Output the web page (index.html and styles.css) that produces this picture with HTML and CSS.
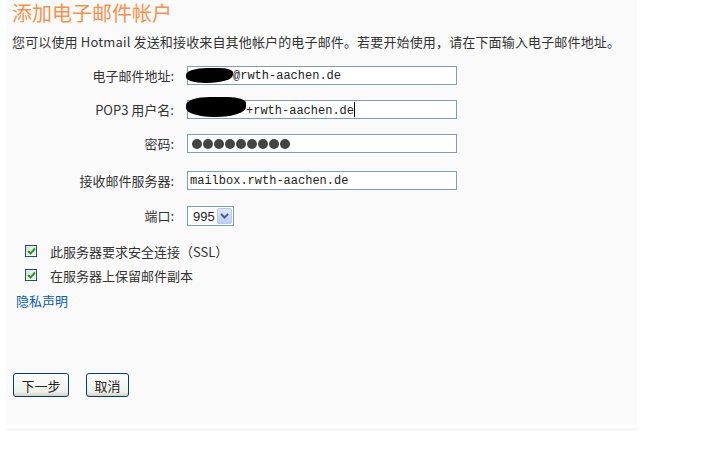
FILE: index.html
```html
<!DOCTYPE html>
<html lang="zh-CN">
<head>
    <meta charset="UTF-8">
    <title>添加电子邮件帐户</title>
    <link rel="stylesheet" href="styles.css">
</head>
<body>
    <div class="panel">
        <h2 class="title">添加电子邮件帐户</h2>
        <p class="intro">您可以使用 Hotmail 发送和接收来自其他帐户的电子邮件。若要开始使用，请在下面输入电子邮件地址。</p>

        <div class="form">
            <div class="row r1">
                <label>电子邮件地址:</label>
                <div class="field">
                    <span class="blob b1"></span>
                    <span class="value v1">@rwth-aachen.de</span>
                </div>
            </div>
            <div class="row r2">
                <label>POP3 用户名:</label>
                <div class="field">
                    <span class="blob b2"></span>
                    <span class="value v2">+rwth-aachen.de<span class="caret"></span></span>
                </div>
            </div>
            <div class="row r3">
                <label>密码:</label>
                <div class="field dots">
                    <span></span><span></span><span></span><span></span><span></span><span></span><span></span><span></span><span></span>
                </div>
            </div>
            <div class="row r4">
                <label>接收邮件服务器:</label>
                <div class="field">
                    <span class="value">mailbox.rwth-aachen.de</span>
                </div>
            </div>
            <div class="row r5">
                <label>端口:</label>
                <div class="select">
                    <span class="sel-text">995</span>
                    <span class="sel-btn">
                        <svg width="9" height="6" viewBox="0 0 9 6"><path d="M1 1 L4.5 4.5 L8 1" fill="none" stroke="#4d6185" stroke-width="2"/></svg>
                    </span>
                </div>
            </div>
        </div>

        <div class="check first">
            <span class="box"><svg width="9" height="8" viewBox="0 0 9 8"><path d="M1 4 L3.5 6.5 L8 1.5" fill="none" stroke="#21a121" stroke-width="2"/></svg></span>
            <span>此服务器要求安全连接（SSL）</span>
        </div>
        <div class="check">
            <span class="box"><svg width="9" height="8" viewBox="0 0 9 8"><path d="M1 4 L3.5 6.5 L8 1.5" fill="none" stroke="#21a121" stroke-width="2"/></svg></span>
            <span>在服务器上保留邮件副本</span>
        </div>

        <a class="privacy" href="#">隐私声明</a>

        <div class="buttons">
            <button class="btn next">下一步</button>
            <button class="btn cancel">取消</button>
        </div>
    </div>
    <div class="strip"></div>
</body>
</html>
```

FILE: styles.css
```css
body { margin: 0; background: #fff; font-family: "Noto Sans CJK SC", "Liberation Sans", sans-serif; font-size: 13px; color: #333; }
.panel { margin-left: 6px; width: 625px; padding: 0 0 28px 6px; background: #fafafa; }
.strip { margin: 3px 0 0 6px; width: 631px; height: 3px; background: #f7f7f7; }
.title { margin: 0; font-size: 20px; line-height: 26px; font-weight: normal; color: #f7914a; }
.intro { margin: 7px 0 0; line-height: 18px; letter-spacing: 0.15px; }

.form { margin-top: 15px; }
.row { display: flex; align-items: center; }
.row label { width: 175px; text-align: right; padding-right: 13px; box-sizing: border-box; line-height: 18px; }
.r2 { margin-top: 15px; }
.r3 { margin-top: 15px; }
.r4 { margin-top: 18px; }
.r5 { margin-top: 16px; }

.field { position: relative; width: 270px; height: 19px; box-sizing: border-box; border: 1px solid #7f9db9; background: #fff; display: flex; align-items: center; padding-left: 2px; }
.value { font-family: "Liberation Mono", monospace; font-size: 12px; color: #222; white-space: nowrap; }
.v1 { margin-left: 43px; }
.v2 { margin-left: 56px; }
.caret { display: inline-block; width: 1px; height: 15px; background: #000; vertical-align: -3px; }
.blob { position: absolute; background: #000; }
.b1 { left: -2px; top: 1px; width: 47px; height: 15px; border-radius: 45% 30% 55% 40%; }
.b2 { left: -2px; top: -4px; width: 60px; height: 20px; border-radius: 40% 30% 50% 45%; }

.dots { gap: 1px; padding-left: 4px; }
.dots span { width: 10px; height: 10px; border-radius: 50%; background: #444; }

.select { width: 47px; height: 20px; box-sizing: border-box; border: 1px solid #7f9db9; background: #fff; display: flex; align-items: center; justify-content: space-between; padding: 0 1px 0 5px; }
.sel-text { font-family: "Liberation Sans", sans-serif; font-size: 13px; color: #222; }
.sel-btn { width: 15px; height: 16px; box-sizing: border-box; border: 1px solid #b7c8f6; border-radius: 2px; background: linear-gradient(#dfe8fe, #b9cdfb); display: flex; align-items: center; justify-content: center; }

.check { display: flex; align-items: center; height: 20px; padding-left: 13px; }
.check.first { margin-top: 15px; margin-bottom: 4px; }
.box { width: 12px; height: 12px; box-sizing: border-box; border: 1px solid #1c5180; background: linear-gradient(135deg, #dcdcd7, #fff); display: flex; align-items: center; justify-content: center; margin-right: 13px; }

.privacy { display: block; margin: 7px 0 0 4px; line-height: 18px; color: #0a5bbf; text-decoration: none; }

.buttons { display: flex; gap: 17px; margin-top: 63px; padding-left: 1px; }
.btn { height: 24px; padding: 0; border: 1px solid #003c74; border-radius: 3px; background: linear-gradient(#ffffff, #f0f0ea 80%, #d6d0c5); font-family: "Noto Sans CJK SC", sans-serif; font-size: 13px; color: #222; }
.next { width: 56px; }
.cancel { width: 43px; }
```
